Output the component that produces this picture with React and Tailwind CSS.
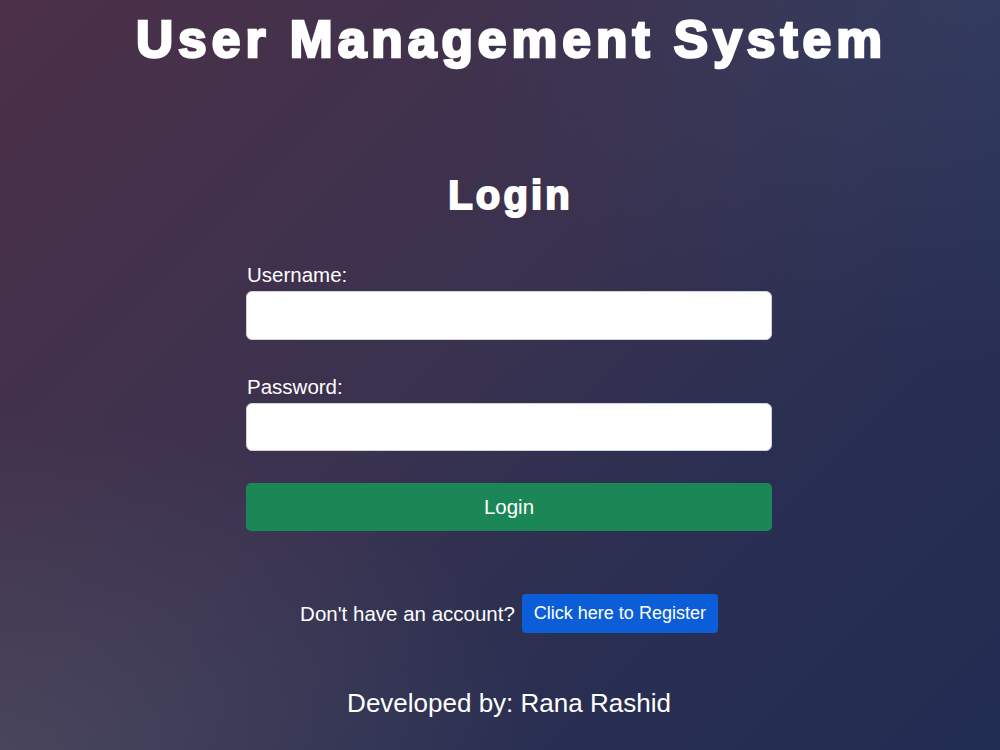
import React from "react";

export default function App() {
  return (
    <div
      className="relative w-full min-h-screen h-[750px] overflow-hidden text-white bg-[radial-gradient(ellipse_55%_45%_at_0%_100%,rgba(95,100,115,0.38),transparent),radial-gradient(ellipse_55%_50%_at_100%_0%,rgba(50,75,115,0.4),transparent),linear-gradient(135deg,#4c3048_0%,#3a324f_45%,#2a2f52_70%,#212c52_100%)]"
      style={{ fontFamily: '"Liberation Sans", Arial, sans-serif' }}
    >
      <div className="flex flex-col items-center pl-[18px]">
        <h1 className="mt-[9px] text-[51.5px] leading-[61px] font-bold tracking-[5px] mr-[-5px] [-webkit-text-stroke:2.6px_white]">
          User Management System
        </h1>

        <h2 className="mt-[101px] text-[40px] leading-[48px] font-bold tracking-[3.2px] mr-[-3.2px] [-webkit-text-stroke:2px_white]">
          Login
        </h2>

        <form className="mt-[44px] w-[526px] flex flex-col" onSubmit={(e) => e.preventDefault()}>
          <label className="text-[20.5px] leading-[24px] pl-[1px]">Username:</label>
          <input
            type="text"
            className="mt-[4px] h-[49px] w-full rounded-[6px] bg-white border border-[#ced4da] px-3 text-black outline-none"
          />

          <label className="mt-[35px] text-[20.5px] leading-[24px] pl-[1px]">Password:</label>
          <input
            type="password"
            className="mt-[4px] h-[48px] w-full rounded-[6px] bg-white border border-[#ced4da] px-3 text-black outline-none"
          />

          <button
            type="submit"
            className="mt-[32px] h-[48px] w-full rounded-[5px] bg-[#1b8756] text-white text-[20.5px]"
          >
            Login
          </button>
        </form>

        <div className="mt-[63px] flex items-center">
          <span className="text-[20.5px] leading-[24px]">Don&apos;t have an account?</span>
          <button className="ml-[7px] h-[39px] px-[12px] rounded-[4px] bg-[#0b5ed7] text-white text-[18px]">
            Click here to Register
          </button>
        </div>

        <p className="mt-[55px] text-[26px] leading-[30px]">Developed by: Rana Rashid</p>
      </div>
    </div>
  );
}
